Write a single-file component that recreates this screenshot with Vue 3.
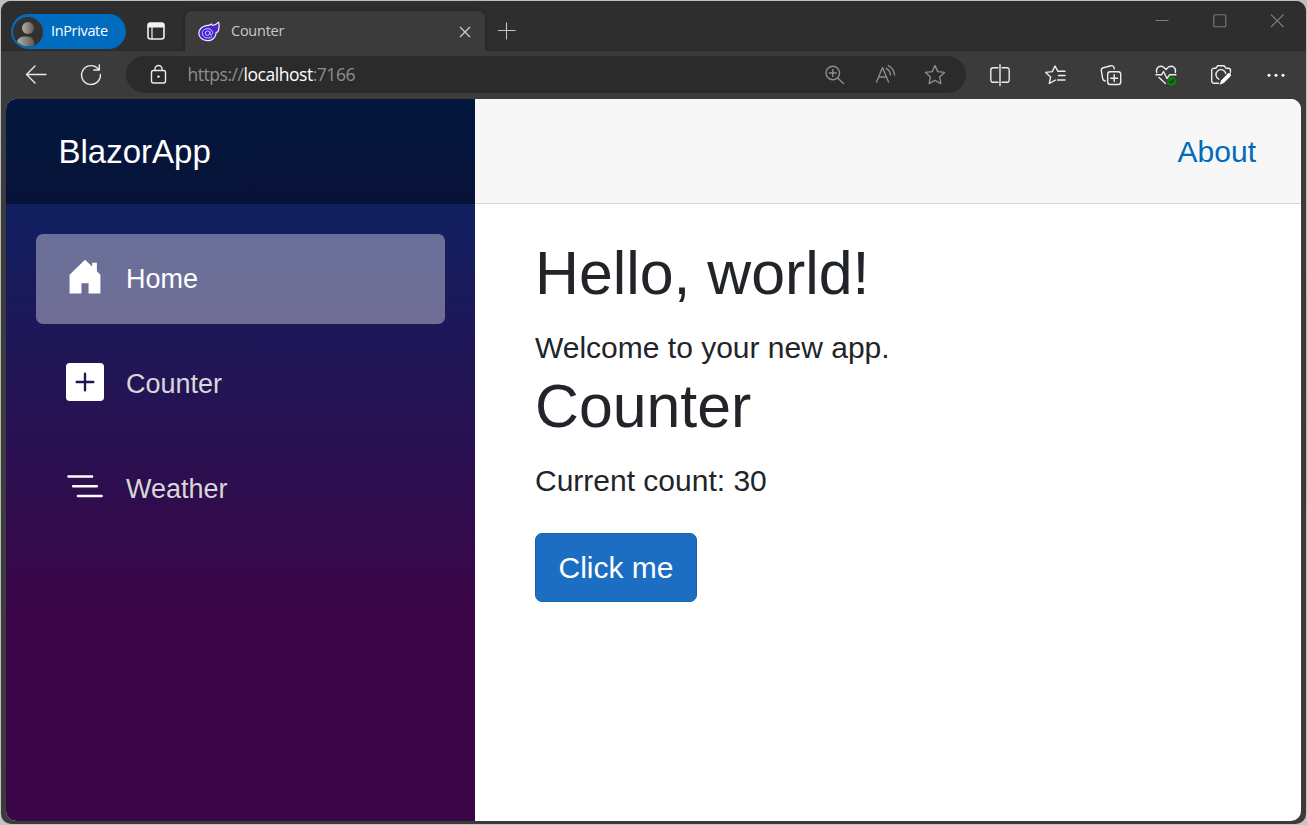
<script setup>
import { ref } from 'vue'

const count = ref(30)
const links = [
  { name: 'Home', icon: 'home', active: true },
  { name: 'Counter', icon: 'plus', active: false },
  { name: 'Weather', icon: 'list', active: false }
]
</script>

<template>
  <div class="desktop">
    <div class="window">
      <header class="titlebar">
        <div class="profile">
          <svg class="avatar" width="30" height="30" viewBox="0 0 30 30">
            <defs>
              <linearGradient id="skin" x1="0" x2="1" y1="0" y2="0">
                <stop offset="0" stop-color="#b4b0ac" />
                <stop offset="1" stop-color="#5c5856" />
              </linearGradient>
              <clipPath id="disc"><circle cx="15" cy="15" r="14.5" /></clipPath>
            </defs>
            <circle cx="15" cy="15" r="15" fill="#33312f" />
            <g clip-path="url(#disc)" fill="url(#skin)">
              <circle cx="15" cy="11" r="6" />
              <path d="M3.500 31v-3q0-8.500 8-8.500h2q8 0 8 8.500v3z" />
            </g>
          </svg>
          <span>InPrivate</span>
        </div>
        <svg class="workspace" width="18" height="18" viewBox="0 0 18 18">
          <rect x="1" y="1" width="16" height="16" rx="2.5" fill="none" stroke="#f2f2f2" stroke-width="1.6" />
          <path d="M1 2.5Q1 1 3 1h12q2 0 2 1.5V5.500H1z" fill="#f2f2f2" />
          <path d="M5 5v12" stroke="#f2f2f2" stroke-width="1.2" />
        </svg>
        <div class="tab">
          <svg width="22" height="21" viewBox="0 0 22 21">
            <path d="M20.600 1.200C21.300 4 21.200 7 20.300 10c-.5 1.200-1.300 1.500-2.300 1.500.2 2.200-.8 4.500-2.500 6-1.700 1.600-3.800 2.300-6 2.100-4.800-.2-8.700-3-8.700-7.300C.8 8.500 4 5.200 8.500 4.700c2.300-.1 3.800-.6 5-1.700l1.200 1.500c2.300-.5 4.200-1.400 5.900-3.300z" fill="#4a24d0" stroke="#f3effd" stroke-width="1.200" stroke-linejoin="round" />
            <path d="M14 15.500c-3.200 2.600-9.300 1.600-9.600-3C4.200 9.300 7 7.500 10 7.700c3.200.2 5 2.600 4.500 4.900-.5 2-2.800 1.700-2.500-.1l.2-2" fill="none" stroke="#d2c6ff" stroke-width="1" />
            <circle cx="9.500" cy="12.200" r="2.200" fill="none" stroke="#d2c6ff" stroke-width="1" />
          </svg>
          <span class="tab-title">Counter</span>
          <svg class="tab-close" width="12" height="12" viewBox="0 0 12 12"><path d="M1 1l10 10M11 1L1 11" stroke="#c8c8c8" stroke-width="1.400" /></svg>
        </div>
        <svg class="new-tab" width="18" height="18" viewBox="0 0 18 18"><path d="M8.500 .5v17M0 8.500h17.500" stroke="#c4c4c4" stroke-width="1.100" /></svg>
        <div class="caption">
          <svg width="14" height="14" viewBox="0 0 14 14"><path d="M.5 7.500h13" /></svg>
          <svg width="14" height="14" viewBox="0 0 14 14"><rect x=".8" y="1.800" width="12" height="12" rx="1" /></svg>
          <svg width="14" height="14" viewBox="0 0 14 14"><path d="M1 1.500l12.500 12.500M13.500 1.500L1 14" /></svg>
        </div>
      </header>

      <div class="toolbar">
        <svg class="tool" viewBox="0 0 24 24"><path d="M22 11.500H2.500M11 3l-8.500 8.500L11 20" /></svg>
        <svg class="tool" viewBox="0 0 24 24"><path d="M21.400 11.500A9.400 9.400 0 1 1 19.600 6.500M20.300 2v5h-5.500" /></svg>
        <div class="address">
          <svg class="lock" viewBox="0 0 24 24">
            <rect x="5.500" y="7.500" width="14" height="12.500" rx="2" />
            <path d="M9 7.500V6a3.500 3.500 0 0 1 7 0v1.500" />
            <circle class="solid" cx="12.500" cy="13.600" r="1.200" />
          </svg>
          <div class="url">https://<b>localhost</b>:7166</div>
          <div class="address-actions">
            <svg viewBox="0 0 24 24"><circle cx="10.800" cy="10" r="6.800" /><path d="M7.300 10h7M10.800 6.500v7M15.800 15l5.700 5.500" /></svg>
            <svg viewBox="0 0 24 24"><path d="M3.500 19L9.500 4.500 15.500 19M5.600 14h7.800M13.200 5.300q4 2.200 4.300 6.700M15.200 2.600q5.800 2.800 6.300 9.400" /></svg>
            <svg viewBox="0 0 24 24"><path d="M12 2.500l2.800 6.100 6.700.8-4.900 4.500 1.300 6.700L12 17.300l-5.900 3.300 1.300-6.700L2.500 9.400l6.700-.8z" /></svg>
          </div>
        </div>
        <div class="extensions">
          <svg viewBox="0 0 24 24"><path d="M8.500 4.700H5a2.200 2.200 0 0 0-2.200 2.200v10.200A2.200 2.200 0 0 0 5 19.300h3.500M15.500 4.700H19a2.200 2.200 0 0 1 2.200 2.200v10.200a2.200 2.200 0 0 1-2.200 2.200h-3.500M8.500 4.700h1.500M14 4.700h1.500M8.500 19.300H10M14 19.300h1.500M12 1.800v20.700" /></svg>
          <svg viewBox="0 0 24 24"><path d="M22 8.300h-7L12 3 9.300 8.600l-6.600.8 4.900 4.500-1.300 6.600 6-3.300M15.500 12.500H22M14.500 17H22" /></svg>
          <svg viewBox="0 0 24 24"><rect x="9.700" y="8.800" width="13" height="12.700" rx="2.500" /><path d="M16.200 11.800v6.700M12.800 15.200h6.800M7.300 18c-1.300 0-2.200-.8-2.600-2.200L3.300 7.500C3.100 6 3.800 5.100 5.300 4.700l7.700-2c1.500-.2 2.500.3 3 1.800l.3 1.300" /></svg>
          <svg viewBox="0 0 24 24">
            <path d="M2.700 9.500C1.500 5 5.300 2 9.200 3.800L12 6.500l2.800-2.700c3.900-1.800 7.700 1.200 6.500 5.700M2 11.800h5.500L9.500 8.500l3.500 7 2.500-3.700H22M5 14.500l6.500 6" />
            <circle cx="17.700" cy="18.300" r="4.600" fill="#107c10" stroke="none" />
            <path class="tick" d="M15.500 18.400l1.600 1.500 3-3.200" />
          </svg>
          <svg viewBox="0 0 24 24">
            <path d="M9.500 20.300H5A2.300 2.300 0 0 1 2.700 18V7.500A2.300 2.300 0 0 1 5 5.200h2l1.600-2.400h6.600l1.700 2.400h2.300a2.300 2.300 0 0 1 2.300 2.300v1.800M9.800 16.200A5 5 0 1 1 16.800 10.500" />
            <path class="solid" d="M12.300 17.200l6.700-6.700c1.700-1.300 4 .9 2.700 2.600l-6.800 7-4.400 1.600z" />
          </svg>
          <svg viewBox="0 0 24 24"><g class="solid"><circle cx="5" cy="12.200" r="1.500" /><circle cx="12" cy="12.200" r="1.500" /><circle cx="19" cy="12.200" r="1.500" /></g></svg>
        </div>
      </div>

      <div class="page">
        <aside class="sidebar">
          <div class="brand">BlazorApp</div>
          <nav>
            <a v-for="link in links" :key="link.name" :class="['nav-link', { active: link.active }]">
              <svg v-if="link.icon === 'home'" viewBox="0 0 16 16"><path d="M6.500 14.900V10.600h3v4.300h5V7.100L13 5.600V2h-2v1.600L8 .7 1.500 7.100v7.800z" /></svg>
              <svg v-else-if="link.icon === 'plus'" viewBox="0 0 16 16"><path d="M1.600 0A1.600 1.600 0 0 0 0 1.600v12.800A1.600 1.600 0 0 0 1.600 16h12.800a1.600 1.600 0 0 0 1.600-1.600V1.600A1.600 1.600 0 0 0 14.400 0zM8.500 4.500v3h3a.5.500 0 0 1 0 1h-3v3a.5.500 0 0 1-1 0v-3h-3a.5.500 0 0 1 0-1h3v-3a.5.500 0 0 1 1 0z" /></svg>
              <svg v-else viewBox="0 0 16 16"><path class="bars" d="M1 3.600h10M3 7.700h10M5 11.800h10" /></svg>
              <span>{{ link.name }}</span>
            </a>
          </nav>
        </aside>
        <main>
          <div class="top-row"><a>About</a></div>
          <article>
            <h1>Hello, world!</h1>
            <div class="text">Welcome to your new app.</div>
            <h1>Counter</h1>
            <p class="text">Current count: {{ count }}</p>
            <button @click="count++">Click me</button>
          </article>
        </main>
      </div>
    </div>
  </div>
</template>

<style>
html, body { margin: 0; overflow: hidden; }
</style>

<style scoped>
* { box-sizing: border-box; }
svg { display: block; flex: none; }
.desktop { width: 1307px; height: 825px; padding: 1px; background: linear-gradient(#bcc0be, #b2b5b4 50%, #c4c5c4); }
.window { height: 823px; border-radius: 10px; overflow: hidden; background: #3b3b3b; display: flex; flex-direction: column; }

.titlebar { height: 50px; flex: none; background: #2e2e2e; border-bottom: 1px solid #292929; display: flex; align-items: flex-start; font-family: "Open Sans", "Noto Sans", sans-serif; }
.profile { width: 115px; height: 35px; margin: 13px 0 0 10px; padding-left: 2px; border-radius: 18px; background: #006cbe; color: #fff; display: flex; align-items: center; font-size: 14.500px; letter-spacing: -.35px; }
.profile span { padding-bottom: 2px; }
.avatar { margin-right: 8px; }
.workspace { margin: 21px 0 0 21px; }
.tab { position: relative; width: 300px; height: 40px; margin: 10px 0 0 20px; padding: 0 14px 0 13px; border-radius: 7px 7px 0 0; background: #3b3b3b; box-shadow: 0 0 4px #202020; clip-path: inset(-4px -4px 0); display: flex; align-items: center; }
.tab-title { margin-left: 11px; padding-bottom: 2px; flex: 1; color: #c9c9c9; font-size: 14.500px; letter-spacing: -.25px; }
.tab-close { margin-top: 2px; }
.new-tab { margin: 21px 0 0 13px; }
.caption { margin: 12px 22px 0 auto; display: flex; gap: 43.500px; }
.caption svg { fill: none; stroke: #7b7b7b; stroke-width: 1.100; overflow: visible; }

.toolbar { height: 48px; flex: none; display: flex; align-items: center; padding-left: 23px; }
.toolbar svg { width: 24px; height: 24px; fill: none; stroke: #ececec; stroke-width: 1.400; stroke-linecap: round; stroke-linejoin: round; }
.toolbar svg .solid { fill: #fff; stroke: none; }
.toolbar svg .tick { stroke: #063a06; stroke-width: 1.200; }
.tool { margin-right: 31px; }
.address { width: 840px; height: 37px; margin: -1px 0 0 -8px; border-radius: 19px; background: #2b2b2b; display: flex; align-items: center; padding: 1px 19px 0 20px; }
.url { flex: 1; margin-left: 17.500px; padding-bottom: 2px; color: #8f8f8f; font: 17.500px "Open Sans", "Noto Sans", sans-serif; letter-spacing: -.46px; }
.url b { color: #fff; font-weight: 400; }
.address-actions { display: flex; gap: 26.500px; }
.toolbar .address-actions svg { stroke: #8c8c8c; }
.extensions { margin-left: 22px; display: flex; gap: 31.200px; }

.page { height: 722px; flex: none; margin: 0 5px 0 5px; border-radius: 10px; overflow: hidden; display: flex; background: #fff; font-family: "Liberation Sans", Arial, sans-serif; color: #212529; }
.sidebar { width: 469px; flex: none; background: linear-gradient(180deg, rgb(5, 39, 103) 0%, #3a0647 70%); }
.brand { height: 105px; padding-left: 52.500px; background: rgba(0, 0, 0, .4); color: #fff; font-size: 33px; line-height: 105px; }
nav { padding: 30px; display: flex; flex-direction: column; gap: 15px; }
.nav-link { height: 90px; padding-left: 30px; border-radius: 7px; display: flex; align-items: center; color: #d7d7d7; font-size: 27px; }
.nav-link.active { background: rgba(255, 255, 255, .37); color: #fff; }
.nav-link svg { width: 38px; height: 38px; margin: -4px 22px 0 0; fill: #fff; }
.bars { stroke: #fff; stroke-width: 1; stroke-linecap: round; }
main { flex: 1; }
.top-row { height: 105px; padding: 2px 45px 0 0; background: #f7f7f7; border-bottom: 1px solid #d6d5d5; display: flex; align-items: center; justify-content: flex-end; font-size: 30px; color: #006bb7; }
article { padding: 33px 60px; }
h1 { margin: 0 0 15px; font-size: 60.800px; line-height: 73px; font-weight: 400; }
.text { margin: 0; font-size: 30px; line-height: 45px; }
button { display: block; width: 162px; height: 69px; margin-top: 30px; padding: 0; border: 1px solid #1861ac; border-radius: 7px; background: #1b6ec2; color: #fff; font: 30px "Liberation Sans", Arial, sans-serif; }
</style>
